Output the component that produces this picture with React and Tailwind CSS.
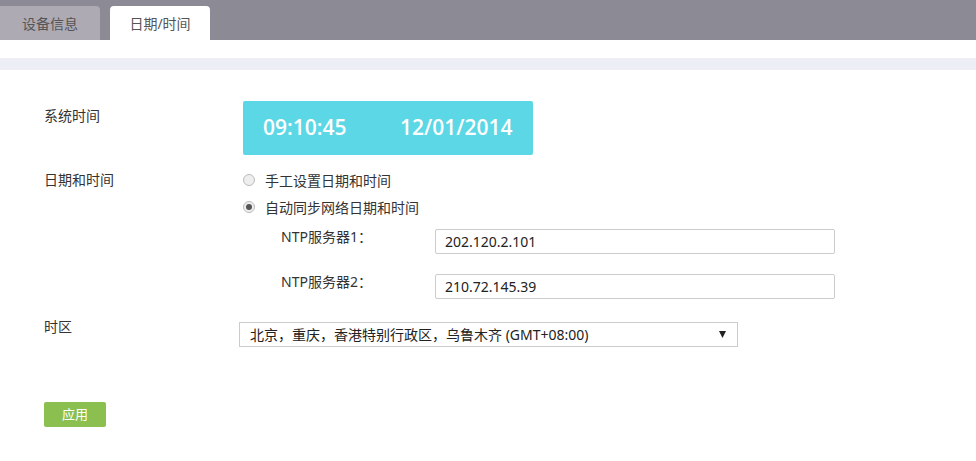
import React from "react";

export default function App() {
  const font = { fontFamily: '"Noto Sans", "Noto Sans CJK SC", sans-serif' };
  return (
    <div className="w-[976px] h-[461px] bg-white text-[14px] text-[#333] overflow-hidden" style={font}>
      <div className="h-[40px] bg-[#8c8a94] flex items-end gap-[10px]">
        <div className="w-[100px] h-[34px] bg-[#aeaab4] rounded-tr-[4px] flex items-center justify-center text-[14px] text-[#555]">设备信息</div>
        <div className="w-[100px] h-[34px] bg-white rounded-t-[4px] flex items-center justify-center text-[14px] text-[#555]">日期/时间</div>
      </div>
      <div className="h-[18px]" />
      <div className="h-[12px] bg-[#eeeef6]" />
      <div className="pl-[44px] pt-[31px]">
        <div className="flex">
          <div className="w-[199px] pt-[7px] leading-[16px]">系统时间</div>
          <div className="w-[290px] h-[54px] bg-[#5bd7e6] rounded-[2px] flex items-center text-white text-[21px] font-semibold pl-[20px]" style={{ fontFamily: '"Open Sans", "Noto Sans", sans-serif' }}>
            <span className="w-[137px]">09:10:45</span>
            <span>12/01/2014</span>
          </div>
        </div>
        <div className="flex mt-[15px]">
          <div className="w-[199px] pt-[2px] leading-[16px]">日期和时间</div>
          <div className="flex flex-col">
            <div className="flex items-center h-[20px]">
              <span className="w-[12px] h-[12px] rounded-full border border-[#bbb] bg-[#eee]" />
              <span className="ml-[10px]">手工设置日期和时间</span>
            </div>
            <div className="flex items-center h-[20px] mt-[7px]">
              <span className="w-[12px] h-[12px] rounded-full border border-[#bbb] bg-[#eee] flex items-center justify-center">
                <span className="w-[6px] h-[6px] rounded-full bg-[#555]" />
              </span>
              <span className="ml-[10px]">自动同步网络日期和时间</span>
            </div>
            <div className="flex mt-[12px]">
              <div className="w-[192px] pl-[38px] pt-[0px] leading-[16px]">NTP服务器1：</div>
              <div className="w-[400px] h-[25px] border border-[#ccc] rounded-[2px] flex items-center pl-[9px] text-[14px] text-[#222]">202.120.2.101</div>
            </div>
            <div className="flex mt-[20px]">
              <div className="w-[192px] pl-[38px] pt-[0px] leading-[16px]">NTP服务器2：</div>
              <div className="w-[400px] h-[25px] border border-[#ccc] rounded-[2px] flex items-center pl-[9px] text-[14px] text-[#222]">210.72.145.39</div>
            </div>
          </div>
        </div>
        <div className="flex mt-[18px]">
          <div className="w-[195px] pt-[2px] leading-[16px]">时区</div>
          <div className="w-[499px] h-[25px] mt-[5px] border border-[#ccc] flex items-center justify-between pl-[10px] pr-[11px] text-[14px] text-[#222]">
            <span>北京，重庆，香港特别行政区，乌鲁木齐 (GMT+08:00)</span>
            <svg width="7" height="7" viewBox="0 0 7 7"><path d="M0 0 H7 L3.5 7 Z" fill="#222" /></svg>
          </div>
        </div>
        <div className="mt-[55px] w-[62px] h-[25px] bg-[#8bbf4f] rounded-[2px] text-white flex items-center justify-center text-[13px]">应用</div>
      </div>
    </div>
  );
}
